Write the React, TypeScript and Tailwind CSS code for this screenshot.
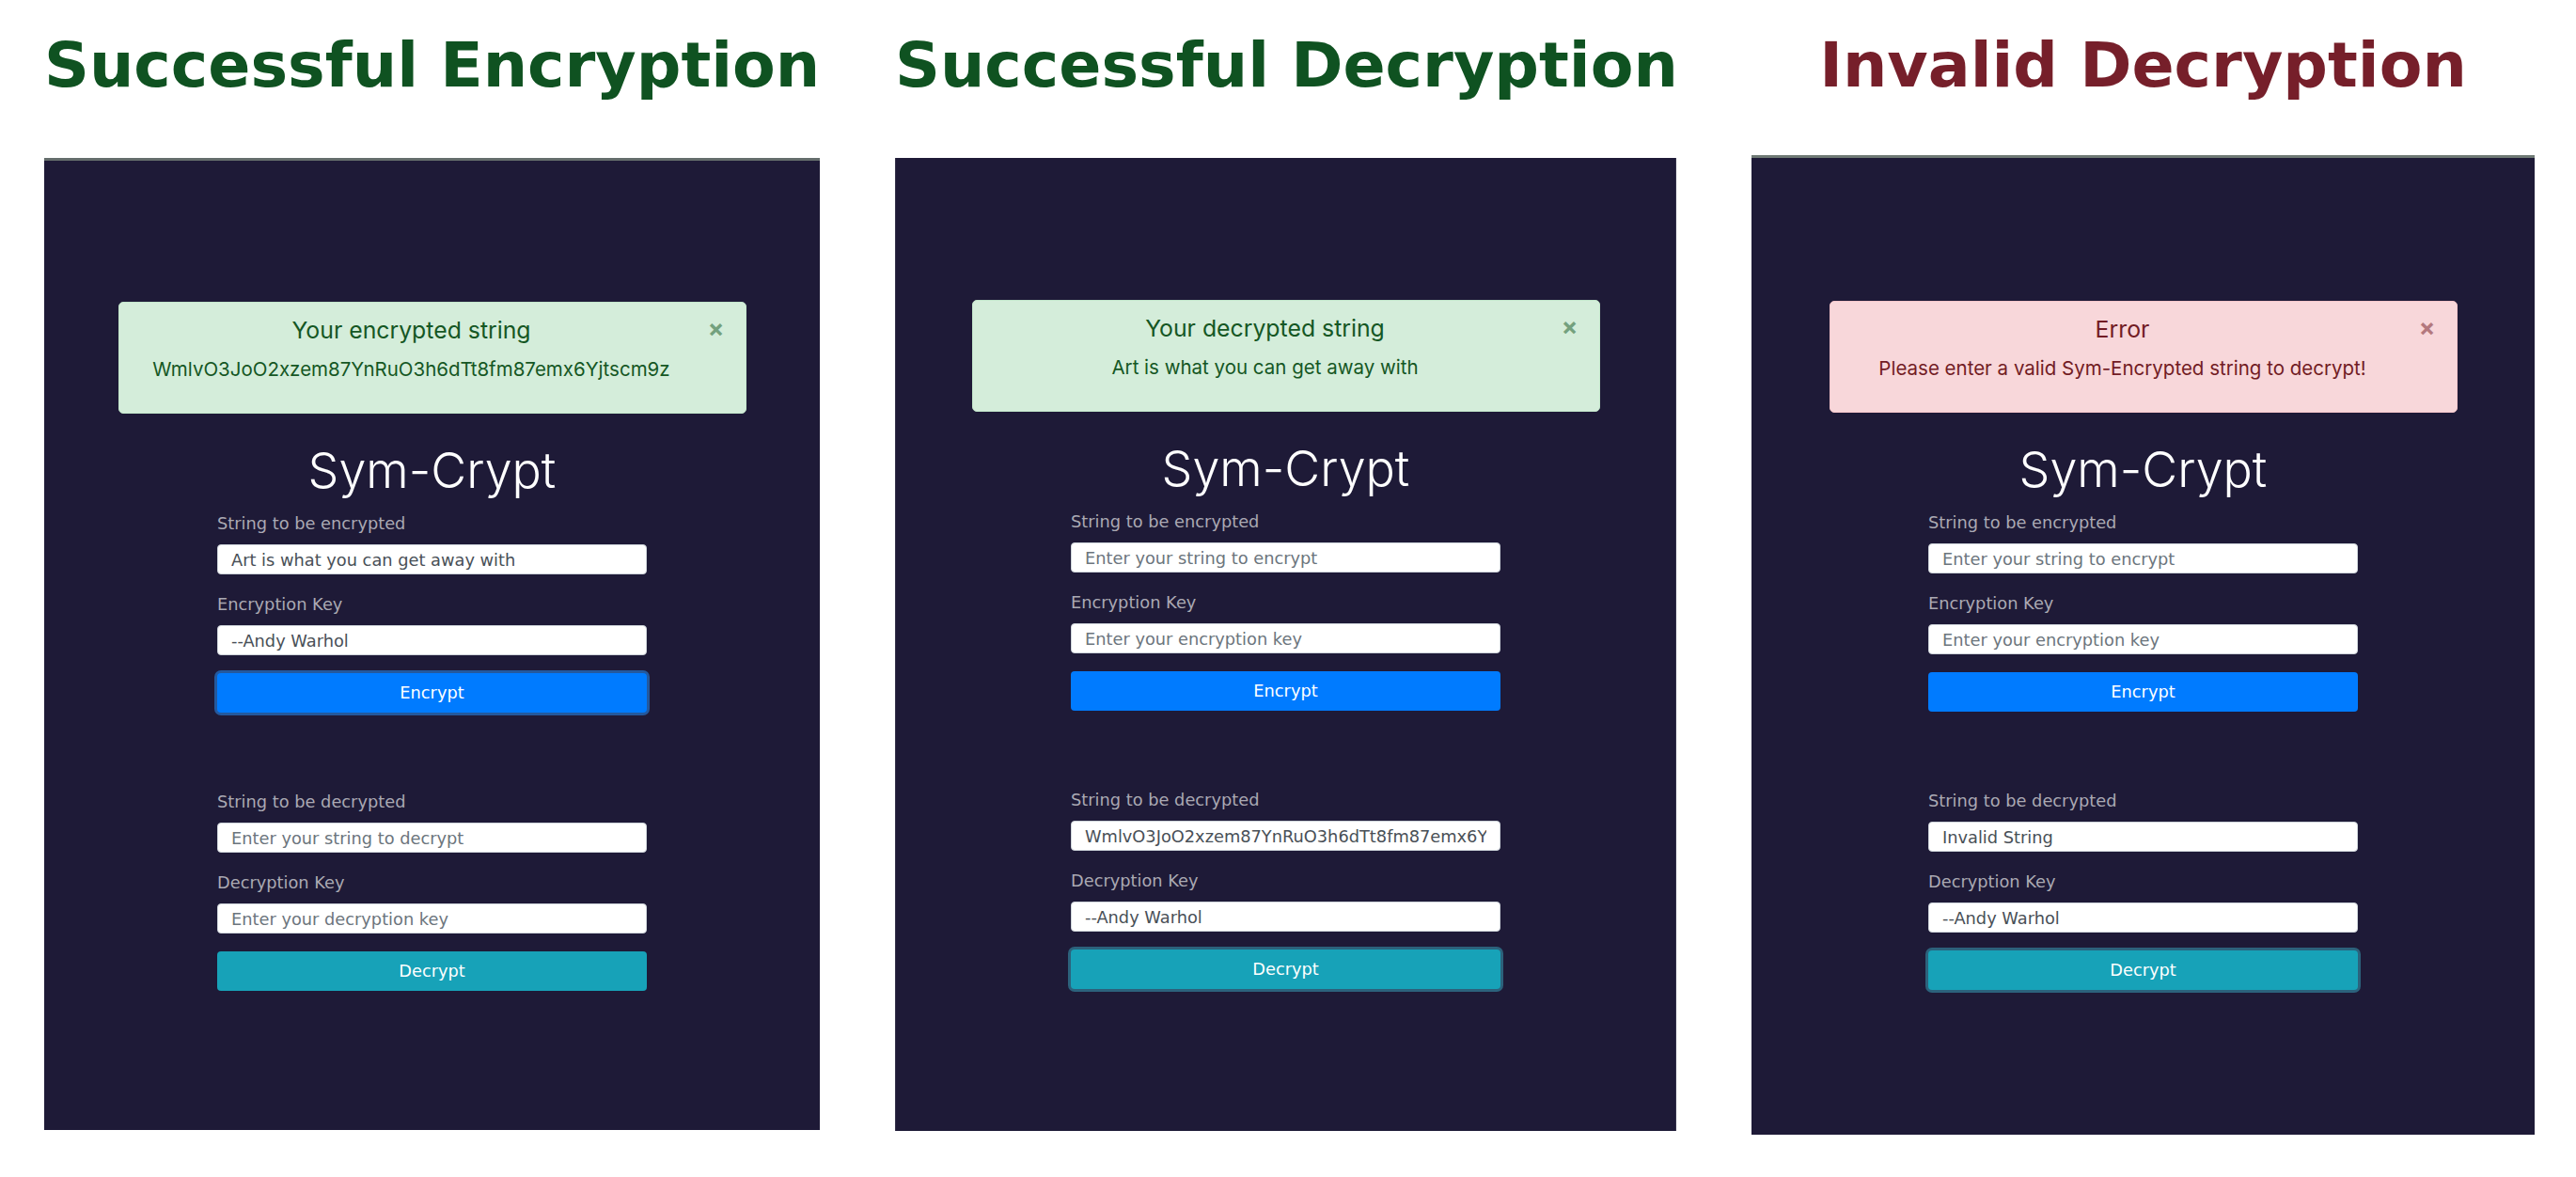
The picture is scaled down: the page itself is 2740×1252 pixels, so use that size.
import React from 'react';

type AlertKind = 'success' | 'danger';

interface PanelData {
  title: string;
  titleColor: string;
  colClass: string;
  panelClass: string;
  alertKind: AlertKind;
  alertHeading: string;
  alertBody: string;
  encStr: string;
  encKey: string;
  decStr: string;
  decKey: string;
  focus: 'encrypt' | 'decrypt';
}

const panels: PanelData[] = [
  {
    title: 'Successful Encryption',
    titleColor: 'text-[#0f5221]',
    colClass: 'w-[825px]',
    panelClass: 'h-[1034px] mt-[60px] border-t-[3px] border-[#646d6c] pt-[150px]',
    alertKind: 'success',
    alertHeading: 'Your encrypted string',
    alertBody: 'WmlvO3JoO2xzem87YnRuO3h6dTt8fm87emx6Yjtscm9z',
    encStr: 'Art is what you can get away with',
    encKey: '--Andy Warhol',
    decStr: '',
    decKey: '',
    focus: 'encrypt',
  },
  {
    title: 'Successful Decryption',
    titleColor: 'text-[#0f5221]',
    colClass: 'w-[831px]',
    panelClass: 'h-[1035px] mt-[60px] border-x border-[#34314a] pt-[151px]',
    alertKind: 'success',
    alertHeading: 'Your decrypted string',
    alertBody: 'Art is what you can get away with',
    encStr: '',
    encKey: '',
    decStr: 'WmlvO3JoO2xzem87YnRuO3h6dTt8fm87emx6Yjtscm9z',
    decKey: '--Andy Warhol',
    focus: 'decrypt',
  },
  {
    title: 'Invalid Decryption',
    titleColor: 'text-[#761f2a]',
    colClass: 'w-[833px]',
    panelClass: 'h-[1042px] mt-[57px] border-t-[3px] border-[#6f7a75] pt-[152px]',
    alertKind: 'danger',
    alertHeading: 'Error',
    alertBody: 'Please enter a valid Sym-Encrypted string to decrypt!',
    encStr: '',
    encKey: '',
    decStr: 'Invalid String',
    decKey: '--Andy Warhol',
    focus: 'decrypt',
  },
];

const Alert: React.FC<{ kind: AlertKind; heading: string; body: string }> = ({ kind, heading, body }) => (
  <div
    className={`relative mx-auto w-[668px] h-[119px] rounded-[5px] border pt-[14px] pl-[20px] pr-[64px] text-center font-['Inter',sans-serif] ${
      kind === 'success'
        ? 'border-[#c3e6cb] bg-[#d4edda] text-[#155724]'
        : 'border-[#f5c6cb] bg-[#f8d7da] text-[#721c24]'
    }`}
  >
    <div className="text-[24.8px] leading-[30px]">{heading}</div>
    <div className="mt-[15px] text-[20.5px] leading-[24px] whitespace-nowrap">{body}</div>
    <span className="absolute right-[22px] top-[13px] text-[26px] leading-[30px] font-bold opacity-50">×</span>
  </div>
);

const Label: React.FC<{ text: string; className?: string }> = ({ text, className = '' }) => (
  <div className={`text-[17.8px] leading-[27px] text-[#aaa9b3] ${className}`}>{text}</div>
);

const Field: React.FC<{ value: string; placeholder: string }> = ({ value, placeholder }) => (
  <input
    readOnly
    value={value}
    placeholder={placeholder}
    className="mt-[9px] block w-full h-[32px] rounded-[4px] border border-[#ced4da] bg-white px-[14px] text-[17.8px] text-[#495057] placeholder:text-[#6c757d] outline-none font-['DejaVu_Sans',sans-serif]"
  />
);

const Panel: React.FC<{ p: PanelData }> = ({ p }) => (
  <div className={`flex flex-col shrink-0 ${p.colClass}`}>
    {/* Heading above the screenshot */}
    <h1
      className={`mt-[30px] h-[78px] leading-[78px] text-center font-bold text-[66.6px] whitespace-nowrap font-['DejaVu_Sans',sans-serif] ${p.titleColor}`}
    >
      {p.title}
    </h1>

    <div className={`bg-[#1e1a37] ${p.panelClass}`}>
      <Alert kind={p.alertKind} heading={p.alertHeading} body={p.alertBody} />

      <h2 className="mt-[31px] text-center text-[52px] leading-[60px] font-light text-white font-['Inter',sans-serif]">
        Sym-Crypt
      </h2>

      <div className="mx-auto mt-[12px] w-[457px] font-['DejaVu_Sans',sans-serif]">
        <Label text="String to be encrypted" />
        <Field value={p.encStr} placeholder="Enter your string to encrypt" />
        <Label text="Encryption Key" className="mt-[18px]" />
        <Field value={p.encKey} placeholder="Enter your encryption key" />
        <button
          className={`mt-[19px] block w-full h-[42px] rounded-[4px] bg-[#007bff] text-white text-[17.8px] ${
            p.focus === 'encrypt' ? 'shadow-[0_0_0_3px_#24599e]' : ''
          }`}
        >
          Encrypt
        </button>

        <Label text="String to be decrypted" className="mt-[81px]" />
        <Field value={p.decStr} placeholder="Enter your string to decrypt" />
        <Label text="Decryption Key" className="mt-[18px]" />
        <Field value={p.decKey} placeholder="Enter your decryption key" />
        <button
          className={`mt-[19px] block w-full h-[42px] rounded-[4px] bg-[#17a2b8] text-white text-[17.8px] ${
            p.focus === 'decrypt' ? 'shadow-[0_0_0_3px_#2c627c]' : ''
          }`}
        >
          Decrypt
        </button>
      </div>
    </div>
  </div>
);

export default function App() {
  return (
    <div className="w-[2740px] h-[1252px] bg-white overflow-hidden">
      <div className="flex pl-[47px] gap-[80px]">
        {panels.map((p) => (
          <Panel key={p.title} p={p} />
        ))}
      </div>
    </div>
  );
}
